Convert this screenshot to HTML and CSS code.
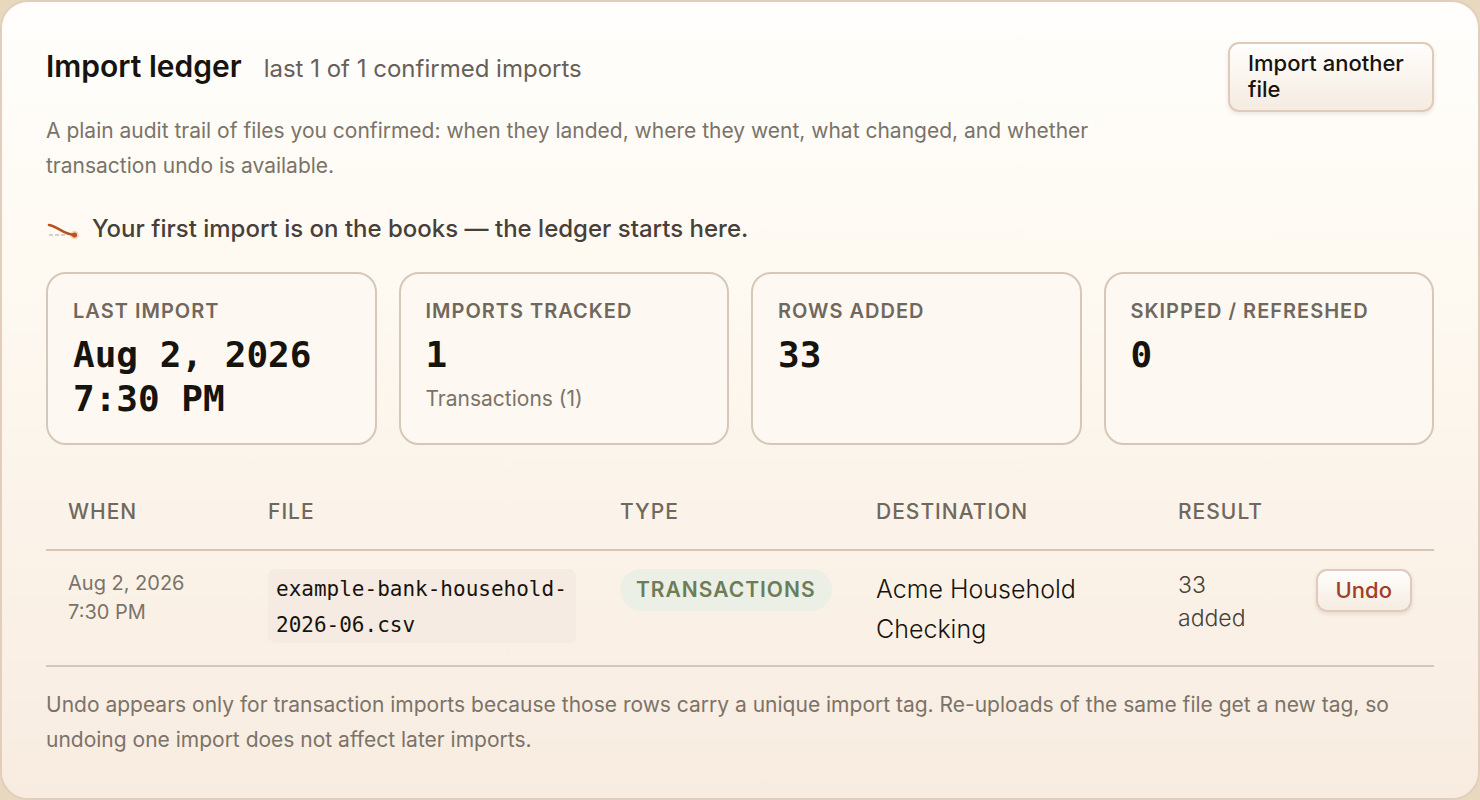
FILE: index.html
```
<!DOCTYPE html>
<html lang="en">
<head>
    <meta charset="UTF-8">
    <meta name="viewport" content="width=device-width, initial-scale=1.0">
    <title>Import ledger</title>
    <link rel="stylesheet" href="styles.css">
</head>
<body>
    <main class="ledger">
        <header class="ledger-header">
            <div class="ledger-intro">
                <div class="ledger-heading">
                    <h1>Import ledger</h1>
                    <span class="count">last 1 of 1 confirmed imports</span>
                </div>
                <p class="hint">A plain audit trail of files you confirmed: when they landed, where they went, what changed, and whether transaction undo is available.</p>
            </div>
            <button class="button import-button" type="button">Import another file</button>
        </header>

        <p class="milestone">
            <svg class="milestone-icon" width="34" height="24" viewBox="0 0 34 24" fill="none" aria-hidden="true">
                <path d="M3 18H20" stroke="#aaa8a5" stroke-dasharray="4 2"/>
                <circle cx="28.5" cy="18" r="4.2" fill="#f5d3bf"/>
                <path d="M3 8C12 9.5 18 18 28.5 18" stroke="#b9521f" stroke-width="2.6" stroke-linecap="round"/>
                <circle cx="28.5" cy="18" r="2.5" fill="#b9521f"/>
            </svg>
            Your first import is on the books — the ledger starts here.
        </p>

        <section class="stats">
            <div class="stat">
                <h2>Last import</h2>
                <p class="stat-value">Aug 2, 2026 7:30 PM</p>
            </div>
            <div class="stat">
                <h2>Imports tracked</h2>
                <p class="stat-value">1</p>
                <p class="stat-note">Transactions (1)</p>
            </div>
            <div class="stat">
                <h2>Rows added</h2>
                <p class="stat-value">33</p>
            </div>
            <div class="stat">
                <h2>Skipped / refreshed</h2>
                <p class="stat-value">0</p>
            </div>
        </section>

        <table class="imports">
            <thead>
                <tr>
                    <th class="col-when">When</th>
                    <th class="col-file">File</th>
                    <th class="col-type">Type</th>
                    <th>Destination</th>
                    <th class="col-result">Result</th>
                    <th class="col-action"></th>
                </tr>
            </thead>
            <tbody>
                <tr>
                    <td class="when">Aug 2, 2026<br>7:30 PM</td>
                    <td><code>example-bank-household-2026-06.csv</code></td>
                    <td><span class="badge">Transactions</span></td>
                    <td class="destination">Acme Household Checking</td>
                    <td class="result">33 added</td>
                    <td class="action"><button class="button undo-button" type="button">Undo</button></td>
                </tr>
            </tbody>
        </table>

        <p class="hint">Undo appears only for transaction imports because those rows carry a unique import tag. Re-uploads of the same file get a new tag, so undoing one import does not affect later imports.</p>
    </main>
</body>
</html>
```
FILE: styles.css
```
*,
*::before,
*::after {
    box-sizing: border-box;
    margin: 0;
    padding: 0;
}

body {
    background: #e8d8bd;
    color: #17130e;
    font-family: Inter, sans-serif;
}

.ledger {
    background: linear-gradient(180deg, #fffefc 0%, #fefaf2 32%, #fbf3e9 65%, #f8ece0 100%);
    border: 2px solid #e2cebc;
    border-radius: 28px;
    min-height: 100vh;
    padding: 40px 44px;
}

.ledger-header {
    align-items: flex-start;
    display: flex;
    gap: 80px;
    justify-content: space-between;
}

.ledger-intro {
    flex: 1;
}

.ledger-heading {
    align-items: baseline;
    display: flex;
    gap: 22px;
    margin-bottom: 23px;
}

h1 {
    font-size: 30px;
    font-weight: 600;
    line-height: 48px;
}

.count {
    color: #686057;
    font-size: 24px;
}

.hint {
    color: #7b7369;
    font-size: 21px;
    line-height: 35px;
}

.button {
    background: linear-gradient(180deg, #fffefc, #f5ebe1);
    border: 2px solid #e0cabb;
    border-radius: 11px;
    box-shadow: 0 2px 4px rgba(90, 60, 30, 0.12);
    cursor: pointer;
    font-family: inherit;
    font-size: 22px;
    font-weight: 500;
    line-height: 26px;
}

.import-button {
    color: #17130e;
    padding: 6px 18px 8px;
    text-align: left;
    width: 206px;
}

.milestone {
    align-items: center;
    color: #484038;
    display: flex;
    font-size: 24px;
    font-weight: 500;
    gap: 12px;
    line-height: 40px;
    margin: 26px 0 23px;
}

.stats {
    display: grid;
    gap: 22px;
    grid-template-columns: repeat(4, 1fr);
    margin-bottom: 30px;
}

.stat {
    background: #fdf9f2;
    border: 2px solid #d5c8b9;
    border-radius: 20px;
    padding: 22px 25px;
}

.stat h2 {
    color: #70675d;
    font-size: 20px;
    font-weight: 600;
    letter-spacing: 1px;
    line-height: 30px;
    margin-bottom: 7px;
    text-transform: uppercase;
}

.stat-value {
    font-family: "DejaVu Sans Mono", monospace;
    font-size: 36px;
    font-weight: 700;
    line-height: 44px;
}

.stat-note {
    color: #7b7369;
    font-size: 21px;
    line-height: 35px;
    margin-top: 4px;
}

.imports {
    border-collapse: collapse;
    margin-bottom: 20px;
    table-layout: fixed;
    width: 100%;
}

.imports th {
    border-bottom: 2px solid #d5c6b8;
    color: #70675d;
    font-size: 21px;
    font-weight: 500;
    letter-spacing: 1px;
    line-height: 34px;
    padding: 20px 22px;
    text-align: left;
    text-transform: uppercase;
}

.imports td {
    border-bottom: 2px solid #d5c6b8;
    padding: 18px 22px 16px;
    vertical-align: top;
}

.col-when {
    width: 200px;
}

.col-file {
    width: 352px;
}

.col-type {
    width: 256px;
}

.col-result {
    width: 138px;
}

.col-action {
    width: 140px;
}

.when {
    color: #7b7369;
    font-size: 20px;
    line-height: 29px;
}

code {
    background: #f5ebe2;
    border-radius: 7px;
    display: block;
    font-family: "DejaVu Sans Mono", monospace;
    font-size: 21px;
    line-height: 36px;
    padding: 2px 8px 0;
}

.badge {
    background: #ecefe6;
    border-radius: 22px;
    color: #6c7d58;
    display: inline-block;
    font-size: 21px;
    font-weight: 600;
    letter-spacing: 1px;
    line-height: 42px;
    padding: 0 16px;
    text-transform: uppercase;
}

.destination {
    font-size: 25px;
    font-weight: 300;
    line-height: 40px;
}

.result {
    color: #484038;
    font-size: 23px;
    font-weight: 300;
    line-height: 33px;
}

.imports .action {
    padding-left: 0;
    text-align: right;
}

.undo-button {
    color: #a23e25;
    padding: 6px 18px 7px;
}
```
